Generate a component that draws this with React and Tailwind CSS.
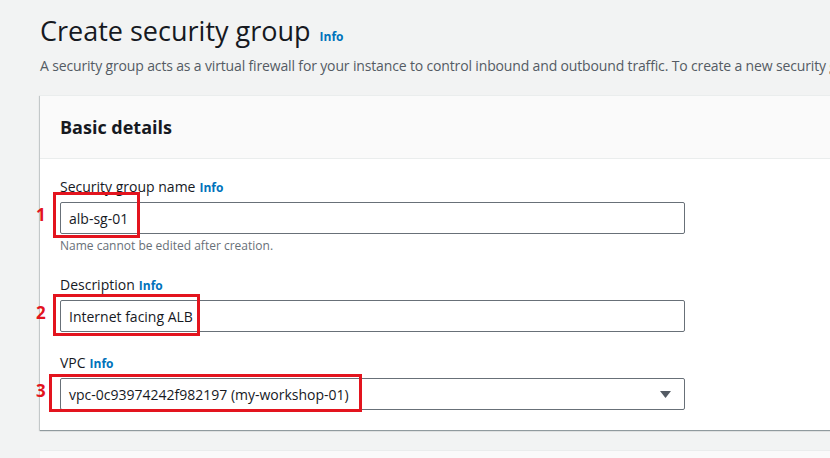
import { useState } from "react";

const font = { fontFamily: '"Open Sans", "Liberation Sans", Arial, sans-serif' };

function Info() {
  return <span className="text-[12px] font-bold text-[#0073bb] ml-1">Info</span>;
}

function Field({ label, value, hint, select, box }) {
  return (
    <div className="relative">
      <label className="block text-[14px] leading-[20px] text-[#16191f] mb-[4px]">
        {label}
        <Info />
      </label>
      <div className="relative w-[625px] h-[32px] border border-[#687078] rounded-[2px] bg-white flex items-center px-[8px] text-[14px] text-[#16191f]">
        <span>{value}</span>
        {select && (
          <svg className="absolute right-[13px] top-[11px]" width="11" height="9" viewBox="0 0 11 9">
            <path d="M0 1h11L5.5 8z" fill="#545b64" />
          </svg>
        )}
      </div>
      {hint && <p className="text-[12px] leading-[16px] text-[#687078] mt-[4px]">{hint}</p>}
      {/* annotation overlay */}
      <div className={"absolute border-[3px] border-[#e3141e] " + box} />
    </div>
  );
}

export default function App() {
  const [fields] = useState([
    { n: "1", label: "Security group name", value: "alb-sg-01", hint: "Name cannot be edited after creation.", box: "left-[-7px] top-[15px] w-[87px] h-[46px]" },
    { n: "2", label: "Description", value: "Internet facing ALB", box: "left-[-7px] top-[19px] w-[147px] h-[42px]" },
    { n: "3", label: "VPC", value: "vpc-0c93974242f982197 (my-workshop-01)", select: true, box: "left-[-11px] top-[21px] w-[313px] h-[38px]" },
  ]);

  return (
    <div className="w-[830px] h-[458px] overflow-hidden bg-[#f2f3f3] pl-[40px]" style={font}>
      <div className="pt-[13px] flex items-baseline">
        <h1 className="text-[27px] leading-[36px] text-[#16191f]">Create security group</h1>
        <span className="text-[12px] font-bold text-[#0073bb] ml-[9px]">Info</span>
      </div>
      <p className="text-[14px] leading-[20px] text-[#545b64] whitespace-nowrap mt-[7px] tracking-[-0.15px]">
        A security group acts as a virtual firewall for your instance to control inbound and outbound traffic. To create a new security group
      </p>

      <div className="mt-[19px] w-[820px] bg-white border-t border-[#eaeded] shadow-[0_1px_1px_0_rgba(0,28,36,0.3),-1px_1px_1px_0_rgba(0,28,36,0.15)]">
        <div className="h-[63px] bg-[#fafafa] border-b border-[#eaeded] flex items-center px-[20px]">
          <h2 className="text-[18px] font-bold text-[#16191f]">Basic details</h2>
        </div>
        <div className="px-[20px] pt-[18px] pb-[20px] flex flex-col gap-[21px]">
          {fields.map(f => (
            <div key={f.n} className="relative">
              <Field label={f.label} value={f.value} hint={f.hint} select={f.select} box={f.box} />
              <span className="absolute left-[-24px] top-[25px] text-[17px] font-bold text-[#e3141e]">{f.n}</span>
            </div>
          ))}
        </div>
      </div>

      <div className="mt-[20px] w-[820px] h-[40px] bg-[#fafafa] border-t border-[#eaeded]" />
    </div>
  );
}
